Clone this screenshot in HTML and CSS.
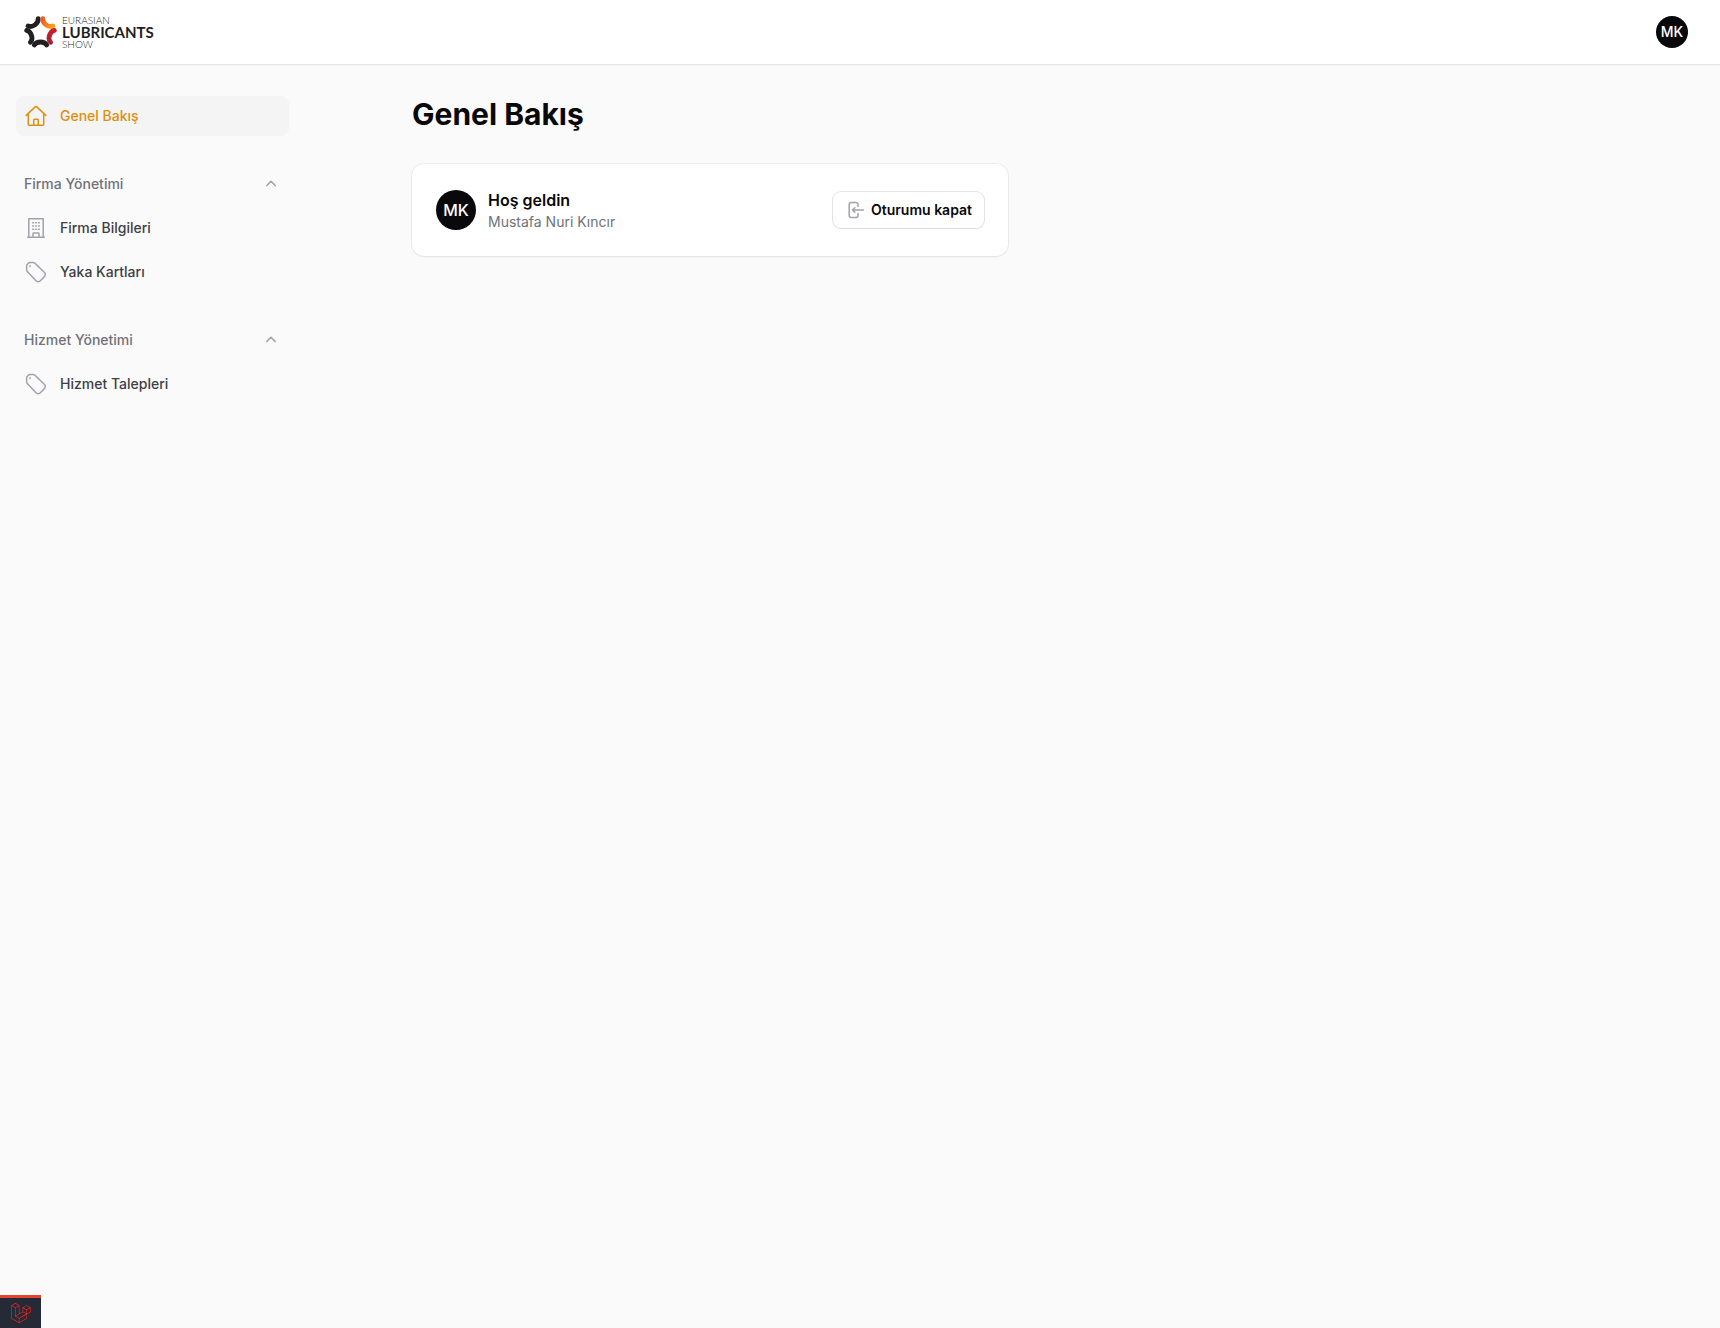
FILE: index.html
```html
<!DOCTYPE html>
<html lang="tr">
<head>
<meta charset="utf-8">
<meta name="viewport" content="width=device-width, initial-scale=1">
<title>Genel Bakış</title>
<link rel="stylesheet" href="styles.css">
</head>
<body>
<svg class="sprite" aria-hidden="true">
  <symbol id="tag" viewBox="0 0 24 24">
    <path d="M2.600 6.600a4 4 0 0 1 4-4h2.300c1 0 1.900.4 2.600 1.100l8.800 8.600a3.100 3.100 0 0 1 0 4.400l-3.900 4.100a3.100 3.100 0 0 1-4.400 0L3.700 12.100A3.700 3.700 0 0 1 2.600 9.500Z"/>
    <circle cx="6" cy="6.200" r=".3"/>
  </symbol>
  <symbol id="chevron" viewBox="0 0 20 20">
    <path d="m5.800 11.600 4.200-4.400 4.200 4.400"/>
  </symbol>
</svg>

<header class="topbar">
  <a class="brand" href="#" aria-label="Eurasian Lubricants Show">
    <svg class="brand-mark" viewBox="-17 -17 34 34" aria-hidden="true">
      <defs>
        <linearGradient id="flame" x1="1" y1="0" x2="0" y2="0">
          <stop offset="0" stop-color="#ee5a24"/>
          <stop offset="1" stop-color="#f9a01b"/>
        </linearGradient>
        <linearGradient id="ember" x1="1" y1="0" x2="0" y2="0">
          <stop offset="0" stop-color="#c8202f"/>
          <stop offset="1" stop-color="#a32431"/>
        </linearGradient>
      </defs>
      <g fill="none" stroke="#231f20" stroke-width="5">
        <path d="M-6.400 12.900C-3.800 8.700 3.800 8.700 6.400 12.900"/>
        <path transform="rotate(72)" d="M-6.400 12.900C-3.800 8.700 3.800 8.700 6.400 12.900"/>
        <path transform="rotate(144)" d="M-6.400 12.900C-3.800 8.700 3.800 8.700 6.400 12.900"/>
        <path transform="rotate(216)" stroke="url(#flame)" d="M-6.400 12.900C-3.800 8.700 3.800 8.700 6.400 12.900"/>
        <path transform="rotate(288)" stroke="url(#ember)" d="M-6.400 12.900C-3.800 8.700 3.800 8.700 6.400 12.900"/>
      </g>
    </svg>
    <span class="brand-name">
      <span class="brand-small">EURASIAN</span>
      <span class="brand-large">LUBRICANTS</span>
      <span class="brand-small">SHOW</span>
    </span>
  </a>
  <button class="avatar avatar-small" type="button">MK</button>
</header>

<div class="layout">
  <nav class="sidebar">
    <ul class="group">
      <li>
        <a class="item item-active" href="#">
          <svg class="icon" viewBox="0 0 24 24" aria-hidden="true"><path d="m2.200 11.400 9-8.500a1.200 1.200 0 0 1 1.600 0l9 8.500M4.300 9.700v10.500c0 .6.400 1 1 1h13.400c.6 0 1-.4 1-1V9.700M9.700 21v-4.800c0-.6.400-1 1-1h2.600c.6 0 1 .4 1 1V21"/></svg>
          Genel Bakış
        </a>
      </li>
    </ul>
    <section>
      <button class="group-label" type="button">Firma Yönetimi
        <svg class="chevron" aria-hidden="true"><use href="#chevron"/></svg>
      </button>
      <ul class="group">
        <li>
          <a class="item" href="#">
            <svg class="icon" viewBox="0 0 24 24" aria-hidden="true"><path d="M3.700 21.200h16.600M4.800 21V2.800h14.400V21M9 21v-3.300c0-.4.300-.7.700-.7h4.600c.4 0 .7.300.7.700V21M8.700 6.800h.8M11.600 6.800h.8M14.500 6.800h.8M8.700 10h.8M11.600 10h.8M14.500 10h.8M8.700 13.200h.8M11.600 13.200h.8M14.500 13.200h.8"/></svg>
            Firma Bilgileri
          </a>
        </li>
        <li>
          <a class="item" href="#">
            <svg class="icon" aria-hidden="true"><use href="#tag"/></svg>
            Yaka Kartları
          </a>
        </li>
      </ul>
    </section>
    <section>
      <button class="group-label" type="button">Hizmet Yönetimi
        <svg class="chevron" aria-hidden="true"><use href="#chevron"/></svg>
      </button>
      <ul class="group">
        <li>
          <a class="item" href="#">
            <svg class="icon" aria-hidden="true"><use href="#tag"/></svg>
            Hizmet Talepleri
          </a>
        </li>
      </ul>
    </section>
  </nav>

  <main class="main">
    <h1 class="title">Genel Bakış</h1>
    <div class="widgets">
      <section class="card">
        <span class="avatar">MK</span>
        <div class="welcome">
          <h2 class="welcome-title">Hoş geldin</h2>
          <p class="welcome-name">Mustafa Nuri Kıncır</p>
        </div>
        <button class="logout" type="button">
          <svg class="logout-icon" viewBox="0 0 20 20" aria-hidden="true"><path d="M13 6.600V4.400a1.800 1.800 0 0 0-1.800-1.800H6a1.800 1.800 0 0 0-1.800 1.800v11.200A1.800 1.800 0 0 0 6 17.400h5.200a1.800 1.800 0 0 0 1.800-1.800v-2.200M9.800 7.700 7.500 10l2.300 2.300M7.500 10h11"/></svg>
          Oturumu kapat
        </button>
      </section>
    </div>
  </main>
</div>

<a class="debugbar" href="#" aria-label="Debugbar">
  <svg class="debugbar-logo" viewBox="0 0 24 24" aria-hidden="true"><path d="M23.642 5.43a.364.364 0 01.014.1v5.149c0 .135-.073.26-.189.326l-4.323 2.49v4.934a.378.378 0 01-.188.326L9.93 23.949a.316.316 0 01-.066.027c-.008.002-.016.008-.024.01a.348.348 0 01-.192 0c-.011-.002-.02-.008-.03-.012-.02-.008-.042-.014-.062-.025L.533 18.755a.376.376 0 01-.189-.326V2.974c0-.033.005-.066.014-.098.003-.012.01-.02.014-.032a.369.369 0 01.023-.058c.004-.013.015-.022.023-.033l.033-.045c.012-.01.025-.018.037-.027.014-.012.027-.024.041-.034H.53L5.043.05a.375.375 0 01.375 0L9.93 2.647h.002c.015.01.027.021.04.033l.038.027c.013.014.02.03.033.045.008.011.02.021.025.033.01.02.017.038.024.058.003.011.01.021.013.032.01.031.014.064.014.098v9.652l3.76-2.164V5.527c0-.033.004-.066.013-.098.003-.01.01-.02.013-.032a.487.487 0 01.024-.059c.007-.012.018-.02.025-.033.012-.015.021-.03.033-.043.012-.012.025-.02.037-.028.014-.01.026-.023.041-.032h.001l4.513-2.598a.375.375 0 01.375 0l4.513 2.598c.016.01.027.021.042.031.012.01.025.018.036.028.013.014.022.03.034.044.008.012.019.021.024.033.011.02.018.04.024.06.006.01.012.021.015.032zm-.74 5.032V6.179l-1.578.908-2.182 1.256v4.283zm-4.51 7.75v-4.287l-2.147 1.225-6.126 3.498v4.325zM1.093 3.624v14.588l8.273 4.761v-4.325l-4.322-2.445-.002-.003H5.04c-.014-.01-.025-.021-.04-.031-.011-.01-.024-.018-.035-.027l-.001-.002c-.013-.012-.021-.025-.031-.04-.01-.011-.021-.022-.028-.036h-.003c-.008-.014-.013-.031-.02-.047-.006-.016-.014-.027-.018-.043a.49.49 0 01-.008-.057c-.002-.014-.006-.027-.006-.041V5.789l-2.180-1.257zM5.230.81L1.470 2.974l3.760 2.164 3.758-2.164zm1.956 13.505l2.182-1.256V3.624l-1.580.91-2.182 1.255v9.435zm11.581-10.950l-3.760 2.163 3.760 2.163 3.759-2.164zm-.376 4.978L16.210 7.087 14.630 6.180v4.283l2.182 1.256 1.580.908zm-8.650 9.654l5.514-3.148 2.756-1.572-3.757-2.163-4.323 2.489-3.941 2.270z"/></svg>
</a>
</body>
</html>
```

FILE: styles.css
```css
*,
*::before,
*::after {
  box-sizing: border-box;
}

body {
  margin: 0;
  min-height: 100vh;
  background: #fafafa;
  color: #09090b;
  font: 400 14px/20px Inter, sans-serif;
}

h1, h2, p, ul {
  margin: 0;
  padding: 0;
}

ul {
  list-style: none;
}

a {
  color: inherit;
  text-decoration: none;
}

button {
  border: 0;
  background: none;
  color: inherit;
  font: inherit;
  cursor: pointer;
}

svg {
  fill: none;
  stroke: currentColor;
  stroke-width: 1.5;
  stroke-linecap: round;
  stroke-linejoin: round;
  flex-shrink: 0;
}

.sprite {
  display: none;
}

/* Top bar */
.topbar {
  display: flex;
  align-items: center;
  justify-content: space-between;
  height: 64px;
  padding: 0 32px 0 24px;
  background: #fff;
  box-shadow: 0 0 0 1px rgb(9 9 11 / 5%), 0 1px 2px rgb(0 0 0 / 5%);
}

.brand {
  display: flex;
  align-items: center;
  gap: 5px;
  color: #231f20;
}

.brand-mark {
  width: 33px;
  height: 33px;
}

.brand-name {
  display: flex;
  flex-direction: column;
  font-family: Lato, sans-serif;
  line-height: 12px;
}

.brand-small {
  font-size: 10px;
  font-weight: 300;
}

.brand-large {
  font-size: 15px;
  font-weight: 700;
}

.avatar {
  display: grid;
  place-items: center;
  width: 40px;
  height: 40px;
  padding: 0;
  border-radius: 50%;
  background: #09090b;
  color: #fff;
  font-size: 16px;
  font-weight: 500;
}

.avatar-small {
  width: 32px;
  height: 32px;
  font-size: 14px;
}

/* Page layout */
.layout {
  display: flex;
}

.sidebar {
  display: flex;
  flex-direction: column;
  gap: 28px;
  width: 305px;
  margin-right: 15px;
  padding: 32px 16px;
  flex-shrink: 0;
  font-weight: 500;
  line-height: 24px;
}

.group {
  display: grid;
  gap: 4px;
}

.item {
  display: flex;
  align-items: center;
  gap: 12px;
  padding: 8px;
  border-radius: 8px;
  color: #3f3f46;
}

.item-active {
  background: #f4f4f5;
  color: #df8f0f;
}

.icon {
  width: 24px;
  height: 24px;
  color: #a1a1aa;
}

.item-active .icon {
  color: inherit;
}

.group-label {
  display: flex;
  align-items: center;
  justify-content: space-between;
  width: 100%;
  margin-bottom: 4px;
  padding: 8px;
  color: #71717a;
}

.chevron {
  width: 20px;
  height: 20px;
  color: #a1a1aa;
}

.main {
  flex: 1;
  display: grid;
  align-content: start;
  gap: 32px;
  max-width: 1280px;
  margin: 0 auto;
  padding: 32px;
}

.title {
  font-size: 30px;
  font-weight: 700;
  line-height: 36px;
}

.widgets {
  display: grid;
  grid-template-columns: 1fr 1fr;
  gap: 24px;
}

.card {
  display: flex;
  align-items: center;
  gap: 12px;
  padding: 24px;
  border-radius: 12px;
  background: #fff;
  box-shadow: 0 0 0 1px rgb(9 9 11 / 5%), 0 1px 2px rgb(0 0 0 / 5%);
}

.welcome {
  flex: 1;
}

.welcome-title {
  font-size: 16px;
  font-weight: 600;
  line-height: 24px;
}

.welcome-name {
  color: #71717a;
}

.logout {
  display: flex;
  align-items: center;
  gap: 6px;
  padding: 8px 12px;
  border-radius: 8px;
  background: #fff;
  box-shadow: 0 0 0 1px rgb(9 9 11 / 10%), 0 1px 2px rgb(0 0 0 / 5%);
  font-weight: 600;
}

.logout-icon {
  width: 20px;
  height: 20px;
  color: #a1a1aa;
}

/* Collapsed debug bar, pinned over the page corner */
.debugbar {
  position: fixed;
  bottom: 0;
  left: 0;
  display: grid;
  place-items: center;
  width: 41px;
  height: 33px;
  border-top: 3px solid #e74430;
  background: #252a37;
}

.debugbar-logo {
  width: 20px;
  height: 20px;
  fill: #f4281d;
  stroke: none;
}
```
